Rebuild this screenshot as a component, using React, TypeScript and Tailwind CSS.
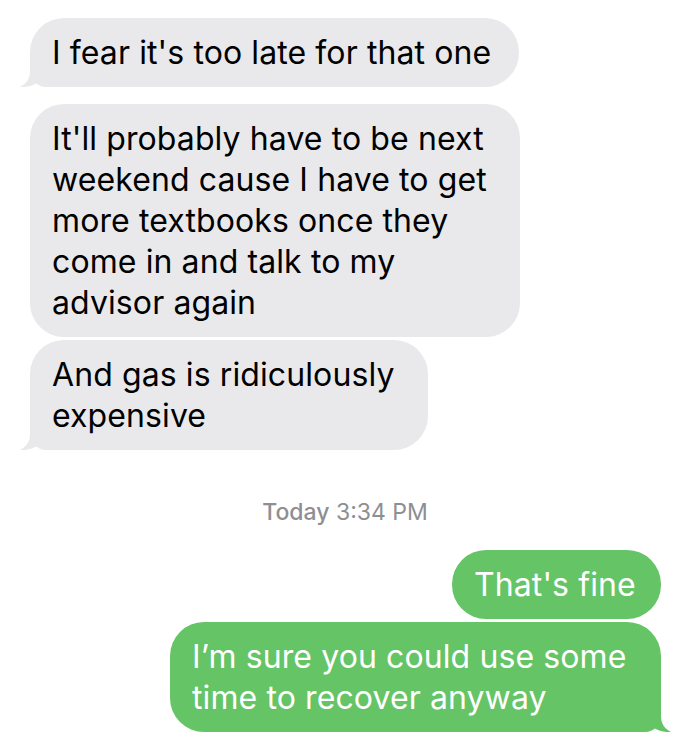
import type { ReactNode } from "react";

type BubbleProps = {
  lines: string[];
  from: "them" | "me";
  tail?: boolean;
  className?: string;
};

function Tail({ from }: { from: "them" | "me" }) {
  const fill = from === "them" ? "#e9e9eb" : "#65c466";
  return (
    <svg
      viewBox="0 0 26 24"
      className={
        from === "them"
          ? "absolute bottom-0 -left-[10px] h-[24px] w-[26px]"
          : "absolute bottom-0 -right-[10px] h-[24px] w-[26px] -scale-x-100"
      }
    >
      <path d="M10 0 L10 8 C10 16 6 21 0 24 C6 24.5 12 23 17 20 L26 8 L26 0 Z" fill={fill} />
    </svg>
  );
}

function Bubble({ lines, from, tail, className }: BubbleProps) {
  const them = from === "them";
  const corner = tail ? (them ? "rounded-bl-[16px]" : "rounded-br-[16px]") : "";
  return (
    <div
      className={`relative rounded-[34px] ${corner} py-[14px] pl-[22px] text-[32px] leading-[41px] tracking-[0.1px] ${
        them ? "bg-[#e9e9eb] text-black" : "bg-[#65c466] text-white"
      } ${className ?? ""}`}
    >
      {lines.map((l) => (
        <div key={l} className="whitespace-nowrap">
          {l}
        </div>
      ))}
      {tail && <Tail from={from} />}
    </div>
  );
}

function Stamp({ children }: { children: ReactNode }) {
  return <div className="text-center text-[23px] leading-[28px] text-[#8e8e93]">{children}</div>;
}

export default function App() {
  return (
    <div className="min-h-[749px] w-[690px] bg-white pt-[18px] font-['Inter',sans-serif]">
      <div className="flex flex-col items-start pl-[30px]">
        <Bubble from="them" tail className="w-[489px]" lines={["I fear it's too late for that one"]} />
        <Bubble
          from="them"
          className="mt-[17px] w-[490px]"
          lines={[
            "It'll probably have to be next",
            "weekend cause I have to get",
            "more textbooks once they",
            "come in and talk to my",
            "advisor again",
          ]}
        />
        <Bubble from="them" tail className="mt-[3px] w-[398px]" lines={["And gas is ridiculously", "expensive"]} />
      </div>

      <div className="mt-[48px]">
        <Stamp>
          <span className="font-medium">Today</span> 3:34 PM
        </Stamp>
      </div>

      <div className="mt-[24px] flex flex-col items-end pr-[29px]">
        <Bubble from="me" className="w-[209px]" lines={["That's fine"]} />
        <Bubble
          from="me"
          tail
          className="mt-[3px] w-[491px]"
          lines={["I\u2019m sure you could use some", "time to recover anyway"]}
        />
      </div>
    </div>
  );
}
